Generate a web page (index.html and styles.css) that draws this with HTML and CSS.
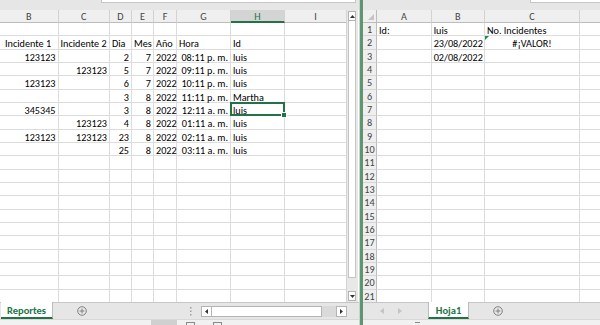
FILE: index.html
```html
<!DOCTYPE html>
<html lang="es">
<head>
  <meta charset="UTF-8" />
  <title>Libro1 - Excel</title>
  <link rel="stylesheet" href="styles.css">
</head>
<body>

<div class="window">

  <section class="pane pane-left">
    <div class="topstrip"><div class="fbox fbox-left"></div></div>
    <div class="sheet-area">
      <div class="grid grid-left" id="gridLeft"></div>
      <div class="vscroll">
        <div class="sbtn"><svg width="5" height="3" viewBox="0 0 5 3"><path d="M0 3L2.5 0L5 3Z" fill="#333"/></svg></div>
        <div class="vthumb"></div>
        <div class="vtrack"></div>
        <div class="sbtn"><svg width="5" height="3" viewBox="0 0 5 3"><path d="M0 0L2.5 3L5 0Z" fill="#333"/></svg></div>
      </div>
    </div>
    <div class="tabbar">
      <div class="tab">Reportes</div>
      <svg class="add add-left" width="10" height="10" viewBox="0 0 10 10"><circle cx="5" cy="5" r="4.3" fill="none" stroke="#808080"/><path d="M5 2.6v4.8M2.6 5h4.8" stroke="#808080"/></svg>
      <span class="spacer"></span>
      <svg class="grip" width="2" height="9" viewBox="0 0 2 9"><rect y="0" width="1.5" height="1.5" fill="#a0a0a0"/><rect y="3.5" width="1.5" height="1.5" fill="#a0a0a0"/><rect y="7" width="1.5" height="1.5" fill="#a0a0a0"/></svg>
      <div class="hscroll">
        <div class="sbtn"><svg width="3" height="5" viewBox="0 0 3 5"><path d="M3 0L0 2.5L3 5Z" fill="#333"/></svg></div>
        <div class="hthumb"></div>
        <div class="htrack"></div>
        <div class="sbtn"><svg width="3" height="5" viewBox="0 0 3 5"><path d="M0 0L3 2.5L0 5Z" fill="#333"/></svg></div>
      </div>
    </div>
    <div class="status">
      <span class="view view-on"></span>
      <span class="view"></span>
      <span class="view"></span>
    </div>
  </section>

  <div class="splitter"></div>

  <section class="pane pane-right">
    <div class="topstrip"><div class="fbox fbox-right"></div></div>
    <div class="sheet-area">
      <div class="grid grid-right" id="gridRight"></div>
    </div>
    <div class="tabbar">
      <div class="nav">
        <svg width="4" height="6" viewBox="0 0 4 6"><path d="M4 0L0 3L4 6Z" fill="#c4c4c4"/></svg>
        <svg width="4" height="6" viewBox="0 0 4 6"><path d="M0 0L4 3L0 6Z" fill="#c4c4c4"/></svg>
      </div>
      <div class="tab tab-short">Hoja1</div>
      <svg class="add add-right" width="10" height="10" viewBox="0 0 10 10"><circle cx="5" cy="5" r="4.3" fill="none" stroke="#808080"/><path d="M5 2.6v4.8M2.6 5h4.8" stroke="#808080"/></svg>
    </div>
    <div class="status">
      <span class="mark"></span>
    </div>
  </section>

</div>

<script>
  // Sheet contents
  const sheets = {
    gridLeft: {
      cols: ["B", "C", "D", "E", "F", "G", "H", "I"],
      rowHeader: false,
      sel: { col: "H", row: 7 },
      data: [
        [],
        ["Incidente 1", "Incidente 2", "Dia", "Mes", "Año", "Hora", "Id"],
        ["123123", "", "2", "7", "2022", "08:11 p. m.", "luis"],
        ["", "123123", "5", "7", "2022", "09:11 p. m.", "luis"],
        ["123123", "", "6", "7", "2022", "10:11 p. m.", "luis"],
        ["", "", "3", "8", "2022", "11:11 p. m.", "Martha"],
        ["345345", "", "3", "8", "2022", "12:11 a. m.", "luis"],
        ["", "123123", "4", "8", "2022", "01:11 a. m.", "luis"],
        ["123123", "123123", "23", "8", "2022", "02:11 a. m.", "luis"],
        ["", "", "25", "8", "2022", "03:11 a. m.", "luis"]
      ]
    },
    gridRight: {
      cols: ["A", "B", "C", ""],
      rowHeader: true,
      flag: { col: "C", row: 2 },
      data: [
        ["Id:", "luis", "No. Incidentes"],
        ["", "23/08/2022", "#¡VALOR!"],
        ["", "02/08/2022"]
      ]
    }
  };

  const ROWS = 21;

  function align(v) {
    if (v.startsWith("#")) return " c";
    if (/^\d/.test(v)) return " r";
    return "";
  }

  function build(id, sheet) {
    const grid = document.getElementById(id);
    let html = "";
    if (sheet.rowHeader) html += '<div class="hcell corner"></div>';
    sheet.cols.forEach(c => {
      const on = sheet.sel && sheet.sel.col === c ? " on" : "";
      html += `<div class="hcell${on}">${c}</div>`;
    });
    for (let r = 1; r <= ROWS; r++) {
      if (sheet.rowHeader) html += `<div class="rh">${r}</div>`;
      const row = sheet.data[r - 1] || [];
      sheet.cols.forEach((c, i) => {
        const v = row[i] || "";
        let cls = "cell" + align(v);
        if (sheet.sel && sheet.sel.col === c && sheet.sel.row === r) cls += " sel";
        if (sheet.flag && sheet.flag.col === c && sheet.flag.row === r) cls += " flag";
        html += `<div class="${cls}">${v}</div>`;
      });
    }
    grid.innerHTML = html;
  }

  Object.keys(sheets).forEach(id => build(id, sheets[id]));
</script>

</body>
</html>
```

FILE: styles.css
```css
* { margin: 0; padding: 0; box-sizing: border-box; }
body {
  font-family: Calibri, Carlito, "Liberation Sans", sans-serif;
  font-size: 10.2px;
  color: #000;
  background: #e6e6e6;
  overflow: hidden;
}
.window {
  display: flex;
  width: 600px;
  height: 325px;
}
.pane {
  display: flex;
  flex-direction: column;
  height: 100%;
  min-width: 0;
}
.pane-left { width: 359px; }
.pane-right { flex: 1; }
.splitter {
  width: 4px;
  background: #5f9672;
  border-left: 1px solid #c9d3cc;
}

/* formula bar edge */
.topstrip {
  height: 10px;
  display: flex;
  background: #e6e6e6;
}
.fbox {
  height: 3px;
  background: #fff;
  border: 1px solid #c6c6c6;
  border-top: none;
}
.fbox-left { margin-left: 101px; width: 255px; }
.fbox-right { margin-left: 167px; flex: 1; border-right: none; }

/* grid */
.sheet-area {
  flex: 1;
  display: flex;
  min-height: 0;
  overflow: hidden;
  background: #fff;
}
.grid {
  flex: 1;
  display: grid;
  grid-template-rows: 13px;
  grid-auto-rows: 13.33px;
  align-content: start;
  overflow: hidden;
}
.grid-left { grid-template-columns: 58.5px 51.5px 22px 22px 23px 54px 54px 62px; }
.grid-right { grid-template-columns: 14px 54.7px 53.3px 95px 60px; }

.hcell {
  background: #efefef;
  color: #444;
  text-align: center;
  padding-top: 1px;
  line-height: 12px;
  border-right: 1px solid #d2d2d2;
  border-bottom: 1px solid #bcbcbc;
}
.hcell.on {
  background: #d4d4d4;
  color: #217346;
  border-bottom: 2px solid #217346;
}
.corner {
  position: relative;
  border-right-color: #bcbcbc;
}
.corner::after {
  content: "";
  position: absolute;
  right: 2px;
  bottom: 2px;
  border-left: 6px solid transparent;
  border-bottom: 6px solid #c4c4c4;
}
.rh {
  background: #efefef;
  color: #444;
  text-align: center;
  padding-top: 1px;
  line-height: 12px;
  border-right: 1px solid #bcbcbc;
  border-bottom: 1px solid #d6d6d6;
}
.cell {
  padding: 2px 2px 0;
  line-height: 11px;
  white-space: nowrap;
  border-right: 1px solid #dcdcdc;
  border-bottom: 1px solid #dcdcdc;
}
.grid-left .cell:nth-child(8n+1) { padding-left: 5px; }
.cell.r { text-align: right; }
.cell.c { text-align: center; }
.cell.sel { position: relative; }
.cell.sel::after {
  content: "";
  position: absolute;
  top: -1px;
  left: -1px;
  right: -1px;
  bottom: -1px;
  border: 2px solid #217346;
}
.cell.sel::before {
  content: "";
  position: absolute;
  right: -3px;
  bottom: -3px;
  width: 4px;
  height: 4px;
  background: #217346;
  border: 1px solid #fff;
  z-index: 1;
}
.cell.flag { position: relative; }
.cell.flag::before {
  content: "";
  position: absolute;
  top: 0;
  left: 0;
  border-top: 4px solid #1e8c3c;
  border-right: 4px solid transparent;
}

/* scrollbars */
.vscroll {
  width: 12px;
  display: flex;
  flex-direction: column;
  padding: 1px 2px 1px 1px;
  background: #e8e8e8;
  border-left: 1px solid #d4d4d4;
  margin-right: 1px;
}
.sbtn {
  display: flex;
  align-items: center;
  justify-content: center;
  background: #fff;
  border: 1px solid #b4b4b4;
}
.vscroll .sbtn { height: 10px; }
.vthumb {
  height: 257px;
  background: #fff;
  border: 1px solid #c4c4c4;
  border-top: none;
}
.vtrack { flex: 1; }

.hscroll {
  display: flex;
  width: 146px;
  height: 11px;
  margin: 0 12px 0 9px;
}
.hscroll .sbtn { width: 11px; }
.hthumb {
  width: 110px;
  background: #fff;
  border: 1px solid #b4b4b4;
  border-left: none;
}
.htrack { flex: 1; background: #dadada; }

/* sheet tabs */
.tabbar {
  height: 17px;
  display: flex;
  align-items: center;
  background: #e6e6e6;
  border-top: 1px solid #c6c6c6;
}
.tab {
  align-self: stretch;
  width: 52px;
  margin: -1px 0 0 1px;
  padding-top: 2px;
  background: #fff;
  color: #217346;
  font-weight: bold;
  font-size: 10.5px;
  text-align: center;
  border-right: 1px solid #bcbcbc;
  border-bottom: 2px solid #217346;
}
.tab-short { width: 41px; margin-left: 0; border-left: 1px solid #bcbcbc; }
.add-left { margin-left: 24px; }
.add-right { margin-left: 24px; }
.spacer { flex: 1; }
.grip { flex-shrink: 0; }
.nav {
  display: flex;
  gap: 14px;
  width: 65px;
  padding-left: 17px;
}

/* status bar */
.status {
  height: 6px;
  display: flex;
  align-items: flex-start;
  background: #f1f1f1;
  border-top: 1px solid #d8d8d8;
}
.view {
  width: 9px;
  height: 4px;
  margin: 2px 18px 0 0;
  border: 1px solid #8a8a8a;
  border-bottom: none;
}
.view-on {
  width: 26px;
  height: 5px;
  margin: 0 9px 0 151px;
  border: none;
  background: #d0d0d0;
}
.mark {
  width: 5px;
  height: 1px;
  margin: 2px 0 0 52px;
  background: #8a8a8a;
}
```
